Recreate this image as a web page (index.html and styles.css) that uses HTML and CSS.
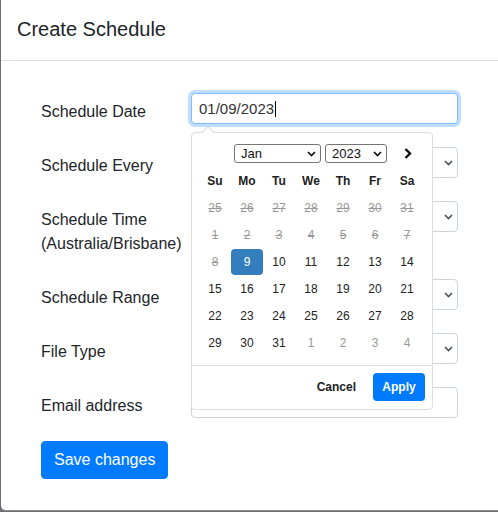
FILE: index.html
```html
<!DOCTYPE html>
<html>
<head>
<meta charset="utf-8">
<link rel="stylesheet" href="styles.css">
</head>
<body>
<div class="modal">
  <div class="modal-header"><h5 class="modal-title">Create Schedule</h5></div>
  <div class="modal-body">
    <div class="form-row">
      <label class="form-label">Schedule Date</label>
      <div class="date-wrap">
        <div class="control focused"><span>01/09/2023</span><span class="caret"></span></div>
        <div class="picker">
          <div class="cal">
            <div class="cal-head">
              <div class="mini-select month"><span>Jan</span><svg width="9" height="6" viewBox="0 0 9 6"><polyline points="1,1 4.5,4.5 8,1" fill="none" stroke="#111" stroke-width="1.7"/></svg></div>
              <div class="mini-select year"><span>2023</span><svg width="9" height="6" viewBox="0 0 9 6"><polyline points="1,1 4.5,4.5 8,1" fill="none" stroke="#111" stroke-width="1.7"/></svg></div>
              <span class="next"><svg width="8" height="11" viewBox="0 0 8 11"><polyline points="1.5,1 6,5.5 1.5,10" fill="none" stroke="#111" stroke-width="2.4"/></svg></span>
            </div>
            <div class="days">
              <div class="dh">Su</div><div class="dh">Mo</div><div class="dh">Tu</div><div class="dh">We</div><div class="dh">Th</div><div class="dh">Fr</div><div class="dh">Sa</div>
              <div class="d dis">25</div><div class="d dis">26</div><div class="d dis">27</div><div class="d dis">28</div><div class="d dis">29</div><div class="d dis">30</div><div class="d dis">31</div>
              <div class="d dis">1</div><div class="d dis">2</div><div class="d dis">3</div><div class="d dis">4</div><div class="d dis">5</div><div class="d dis">6</div><div class="d dis">7</div>
              <div class="d dis">8</div><div class="d active">9</div><div class="d">10</div><div class="d">11</div><div class="d">12</div><div class="d">13</div><div class="d">14</div>
              <div class="d">15</div><div class="d">16</div><div class="d">17</div><div class="d">18</div><div class="d">19</div><div class="d">20</div><div class="d">21</div>
              <div class="d">22</div><div class="d">23</div><div class="d">24</div><div class="d">25</div><div class="d">26</div><div class="d">27</div><div class="d">28</div>
              <div class="d">29</div><div class="d">30</div><div class="d">31</div><div class="d off">1</div><div class="d off">2</div><div class="d off">3</div><div class="d off">4</div>
            </div>
          </div>
          <div class="cal-foot">
            <button class="cancel">Cancel</button>
            <button class="apply">Apply</button>
          </div>
        </div>
      </div>
    </div>
    <div class="form-row">
      <label class="form-label">Schedule Every</label>
      <div class="control select"><svg width="9" height="6" viewBox="0 0 9 6"><polyline points="1,1 4.5,4.5 8,1" fill="none" stroke="#495057" stroke-width="1.6"/></svg></div>
    </div>
    <div class="form-row">
      <label class="form-label">Schedule Time<br>(Australia/Brisbane)</label>
      <div class="control select"><svg width="9" height="6" viewBox="0 0 9 6"><polyline points="1,1 4.5,4.5 8,1" fill="none" stroke="#495057" stroke-width="1.6"/></svg></div>
    </div>
    <div class="form-row">
      <label class="form-label">Schedule Range</label>
      <div class="control select"><svg width="9" height="6" viewBox="0 0 9 6"><polyline points="1,1 4.5,4.5 8,1" fill="none" stroke="#495057" stroke-width="1.6"/></svg></div>
    </div>
    <div class="form-row">
      <label class="form-label">File Type</label>
      <div class="control select"><svg width="9" height="6" viewBox="0 0 9 6"><polyline points="1,1 4.5,4.5 8,1" fill="none" stroke="#495057" stroke-width="1.6"/></svg></div>
    </div>
    <div class="form-row">
      <label class="form-label">Email address</label>
      <div class="control"></div>
    </div>
    <button class="btn-save">Save changes</button>
  </div>
</div>
</body>
</html>
```
FILE: styles.css
```css
html, body {
  margin: 0;
  padding: 0;
  height: 512px;
  overflow: hidden;
  background: #6b6e72;
  font-family: "Liberation Sans", Arial, sans-serif;
  color: #212529;
}
.modal {
  margin-left: 1px;
  background: #fff;
  border-bottom: 1px solid #8c8c8c;
  border-radius: 0 0 0 5px;
}
.modal-header {
  padding: 14px 16px 16px;
  border-bottom: 1px solid #dee2e6;
}
.modal-title {
  margin: 0;
  font-size: 20px;
  line-height: 30px;
  font-weight: 500;
}
.modal-body {
  padding: 32px 40px 31px;
}
.form-row {
  display: grid;
  grid-template-columns: 150px 267px;
  align-items: start;
  margin-bottom: 16px;
}
.form-label {
  padding: 7px 0;
  font-size: 16px;
  line-height: 24px;
}
.control {
  box-sizing: border-box;
  height: 31px;
  border: 1px solid #ced4da;
  border-radius: 4px;
  background: #fff;
}
.control.focused {
  display: flex;
  align-items: center;
  padding-left: 7px;
  border-color: #80bdff;
  box-shadow: 0 0 0 3px rgba(0, 123, 255, 0.25);
  font-size: 15px;
  color: #333;
}
.caret {
  display: inline-block;
  width: 1px;
  height: 16px;
  background: #000;
  margin-left: 1px;
}
.control.select {
  display: flex;
  align-items: center;
  justify-content: flex-end;
  padding-right: 4px;
}
.date-wrap {
  position: relative;
}
.picker {
  position: absolute;
  top: 39px;
  left: 0;
  z-index: 10;
  box-sizing: border-box;
  width: 242px;
  background: #fff;
  border: 1px solid #ddd;
  border-radius: 4px;
  font-size: 12px;
}
.picker::before {
  content: "";
  position: absolute;
  top: -7px;
  left: 9px;
  border-left: 7px solid transparent;
  border-right: 7px solid transparent;
  border-bottom: 7px solid #ccc;
}
.picker::after {
  content: "";
  position: absolute;
  top: -6px;
  left: 10px;
  border-left: 6px solid transparent;
  border-right: 6px solid transparent;
  border-bottom: 6px solid #fff;
}
.cal {
  padding: 7px 9px 9px 7px;
}
.cal-head {
  display: flex;
  align-items: center;
  height: 27px;
  padding-left: 35px;
}
.mini-select {
  box-sizing: border-box;
  height: 19px;
  display: flex;
  align-items: center;
  justify-content: space-between;
  border: 1px solid #767676;
  border-radius: 3px;
  padding: 0 4px 0 6px;
  font-size: 13px;
  color: #111;
}
.mini-select.month {
  width: 87px;
  margin-right: 4px;
}
.mini-select.year {
  width: 62px;
}
.next {
  display: flex;
  margin-left: 17px;
}
.days {
  display: grid;
  grid-template-columns: repeat(7, 32px);
  grid-auto-rows: 27px;
}
.dh, .d {
  display: flex;
  align-items: center;
  justify-content: center;
}
.dh {
  font-weight: bold;
  color: #222;
}
.d {
  color: #222;
}
.d.dis {
  color: #999;
  text-decoration: line-through;
}
.d.off {
  color: #999;
}
.d.active {
  background: #357ebd;
  color: #fff;
  border-radius: 4px;
  margin-top: 1px;
}
.cal-foot {
  display: flex;
  align-items: center;
  justify-content: flex-end;
  border-top: 1px solid #ddd;
  padding: 7px 7px 8px;
}
.cal-foot button {
  font-family: "Liberation Sans", Arial, sans-serif;
  font-size: 12px;
  font-weight: bold;
  border: none;
  padding: 0;
  cursor: pointer;
}
.cancel {
  background: transparent;
  color: #222;
  margin-right: 17px;
}
.apply {
  width: 52px;
  height: 28px;
  background: #007bff;
  color: #fff;
  border-radius: 4px;
}
.btn-save {
  display: block;
  font-family: "Liberation Sans", Arial, sans-serif;
  font-size: 16px;
  line-height: 24px;
  padding: 6px 12px;
  border: 1px solid #007bff;
  border-radius: 4px;
  background: #007bff;
  color: #fff;
}
```
